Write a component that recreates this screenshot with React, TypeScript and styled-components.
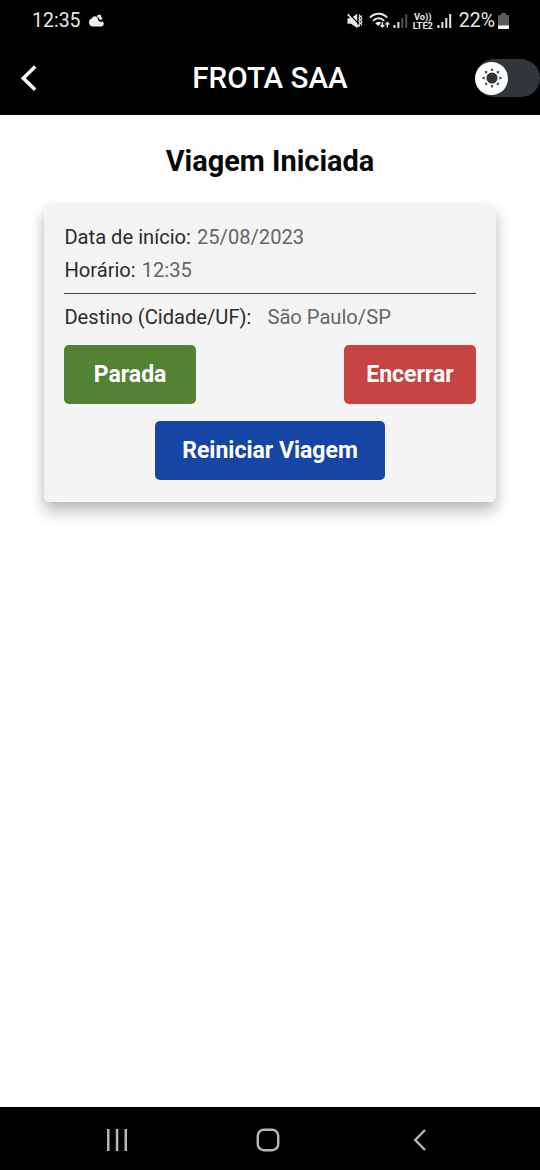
import React from 'react';
import styled, { createGlobalStyle } from 'styled-components';

const GlobalStyle = createGlobalStyle`
  * { box-sizing: border-box; }
  body { margin: 0; background: #fff; font-family: Roboto, "Liberation Sans", sans-serif; }
`;

const Screen = styled.div`
  display: flex;
  flex-direction: column;
  width: 540px;
  height: 1170px;
  background: #fff;
  overflow: hidden;
`;

const StatusBar = styled.div`
  display: flex;
  justify-content: space-between;
  height: 40px;
  padding: 0 31px 0 32px;
  background: #000;
  color: #e6e6e6;
`;

const StatusGroup = styled.div`
  display: flex;
  align-items: center;
  height: 41px;
`;

const StatusText = styled.span<{ $left?: number }>`
  margin-left: ${({ $left }) => $left ?? 0}px;
  font-size: 19.5px;
  line-height: 41px;
  white-space: nowrap;
`;

const Icon = styled.svg<{ $left?: number }>`
  display: block;
  flex: none;
  margin-left: ${({ $left }) => $left ?? 0}px;
`;

const LteBadge = styled.div`
  display: flex;
  flex-direction: column;
  align-items: center;
  width: 22px;
  margin-left: 4px;
  font-size: 9.3px;
  font-weight: 700;
  line-height: 9px;
  white-space: nowrap;
`;

const Header = styled.header`
  display: grid;
  grid-template-columns: 65px 1fr 65px;
  align-items: center;
  height: 75px;
  padding-top: 1px;
  background: #000;
  color: #fff;
`;

const BackButton = styled.button`
  display: flex;
  padding: 0 0 0 20px;
  border: 0;
  background: none;
`;

const HeaderTitle = styled.h1`
  margin: 0;
  font-size: 29.6px;
  font-weight: 500;
  line-height: 34px;
  text-align: center;
  white-space: nowrap;
`;

const ThemeSwitch = styled.div`
  display: flex;
  align-items: center;
  width: 65px;
  height: 38px;
  border-radius: 19px;
  background: #30363a;
`;

const SwitchKnob = styled.div`
  display: flex;
  align-items: center;
  justify-content: center;
  width: 33px;
  height: 33px;
  border-radius: 50%;
  background: #fff;
`;

const Main = styled.main`
  flex: 1;
  padding: 30px 44.4px 0;
`;

const Title = styled.h2`
  margin: 0 0 26px;
  font-size: 28.9px;
  font-weight: 700;
  line-height: 33px;
  color: #080808;
  text-align: center;
  white-space: nowrap;
`;

const Card = styled.section`
  height: 298px;
  padding: 17px 20px;
  margin-top: -0.5px;
  border-radius: 5px;
  background: #f4f4f4;
  box-shadow: 0 9px 15px rgba(0, 0, 0, 0.27), 0 1px 10px rgba(0, 0, 0, 0.03);
`;

const InfoRow = styled.div<{ $gap?: number }>`
  display: flex;
  gap: ${({ $gap }) => $gap ?? 6}px;
  height: 33px;
  font-size: 20.15px;
  line-height: 33px;
  white-space: nowrap;
`;

const Label = styled.span`
  color: #2c2c2c;
`;

const Value = styled.span`
  color: #666;
`;

const Divider = styled.hr`
  height: 1px;
  margin: 6px 0 7px;
  border: 0;
  background: #4a4a4a;
`;

const ButtonRow = styled.div<{ $justify: string; $top: number }>`
  display: flex;
  justify-content: ${({ $justify }) => $justify};
  margin-top: ${({ $top }) => $top}px;
`;

const ActionButton = styled.button<{ $color: string; $width: number }>`
  width: ${({ $width }) => $width}px;
  height: 59px;
  padding: 0;
  border: 0;
  border-radius: 5px;
  background: ${({ $color }) => $color};
  color: #fff;
  font-family: inherit;
  font-size: 23px;
  font-weight: 700;
  white-space: nowrap;
`;

const NavBar = styled.nav`
  display: flex;
  align-items: center;
  justify-content: space-between;
  height: 63px;
  padding: 3px 113px 0 106px;
  background: #000;
`;

const HomeIcon = styled(Icon)`
  margin-right: 6px;
`;

const SignalIcon = ({ left, weak }: { left: number; weak?: boolean }) => (
  <Icon $left={left} width="15" height="16" viewBox="0 0 15 16" fill="#e6e6e6">
    <rect x="0.5" y="12" width="2" height="3" />
    <rect x="4.4" y="9" width="2" height="6" />
    <rect x="8.3" y="5" width="2" height="10" opacity={weak ? 0.35 : 1} />
    <rect x="12.2" y="1" width="2" height="14" opacity={weak ? 0.35 : 1} />
  </Icon>
);

const rays = [0, 45, 90, 135, 180, 225, 270, 315];

export default function App() {
  return (
    <Screen>
      <GlobalStyle />
      <StatusBar>
        <StatusGroup>
          <StatusText>12:35</StatusText>
          <Icon $left={7} width="16" height="13" viewBox="0 0 16 13" fill="#eee">
            <path d="M4.5 12.500a4.200 4.200 0 0 1-.3-8.200C5 1.700 9.200 1.500 10 5c.2.900.4 1.500 1 2.200 1 .8 3 .1 4.200.8 1.300 2 .1 4.500-2.200 4.500Z" />
            <path d="M8.400 2.200C9.300.800 11.400.200 13 1.100c-.3 1.300.3 2.400 1.600 3-.2 1.200-1.600 2-2.900 1.700C11.300 4.100 10.200 2.900 8.400 2.200Z" />
          </Icon>
        </StatusGroup>
        <StatusGroup>
          <Icon width="16" height="16" viewBox="0 0 16 16" fill="#e6e6e6">
            <path d="M.5 5.200H4L10.200.800V15L4 10.800H.500Z" />
            <path d="M2.200 1.200 12 11" stroke="#000" strokeWidth="1.200" />
            <path d="m.8 1.300 11 12.700" stroke="#e6e6e6" strokeWidth="1.700" />
            <path d="m12 1.500 1 1.700-1 1.700 1 1.700-1 1.700 1 1.700-1 1.700 1 1.700M14.600 2.500l-.8 1.500 1 1.500-1 1.700 1 1.700-1 1.700 1 1.700" fill="none" stroke="#e6e6e6" strokeWidth="1.200" />
          </Icon>
          <Icon $left={6} width="22" height="17" viewBox="0 0 22 17" fill="none" stroke="#e6e6e6" strokeWidth="1.900">
            <path d="M1 5.600C5.700.500 13.500.500 18.200 5.600M4 8.800c3.200-3.400 8-3.400 11.200 0" />
            <path d="m6.200 11.300c2-2 4.400-2 6-.6l-3 3.300Z" fill="#e6e6e6" stroke="none" />
            <path d="M13.400 10v5M11.500 13l1.900 2 1.900-2M18.400 15.500v-5M16.500 12.500l1.900-2 1.900 2" strokeWidth="1.400" />
          </Icon>
          <SignalIcon left={2} weak />
          <LteBadge>
            <span>Vo))</span>
            <span>LTE2</span>
          </LteBadge>
          <SignalIcon left={3} />
          <StatusText $left={7}>22%</StatusText>
          <Icon $left={3} width="11" height="16" viewBox="0 0 11 16">
            <path d="M3 0h5v2h2a1 1 0 0 1 1 1v12a1 1 0 0 1-1 1H1a1 1 0 0 1-1-1V3a1 1 0 0 1 1-1h2Z" fill="#5c5c5c" />
            <path d="M0 12.500h11V15a1 1 0 0 1-1 1H1a1 1 0 0 1-1-1Z" fill="#fff" />
          </Icon>
        </StatusGroup>
      </StatusBar>
      <Header>
        <BackButton aria-label="Voltar">
          <Icon width="18" height="28" viewBox="0 0 18 28" fill="none" stroke="#fff" strokeWidth="3.500">
            <path d="M15.200 2.400 3.300 14.200l11.900 11.600" />
          </Icon>
        </BackButton>
        <HeaderTitle>FROTA SAA</HeaderTitle>
        <ThemeSwitch>
          <SwitchKnob>
            <Icon width="24" height="24" viewBox="-12 -12 24 24" fill="#30363a">
              <circle r="5.600" />
              {rays.map((angle) => (
                <path key={angle} d="M-1.500-7.300 0-10.300l1.500 3Z" transform={`rotate(${angle})`} />
              ))}
            </Icon>
          </SwitchKnob>
        </ThemeSwitch>
      </Header>
      <Main>
        <Title>Viagem Iniciada</Title>
        <Card>
          <InfoRow>
            <Label>Data de início:</Label>
            <Value>25/08/2023</Value>
          </InfoRow>
          <InfoRow>
            <Label>Horário:</Label>
            <Value>12:35</Value>
          </InfoRow>
          <Divider />
          <InfoRow $gap={16}>
            <Label>Destino (Cidade/UF):</Label>
            <Value>São Paulo/SP</Value>
          </InfoRow>
          <ButtonRow $justify="space-between" $top={11}>
            <ActionButton $color="#528233" $width={131.4}>Parada</ActionButton>
            <ActionButton $color="#c74444" $width={131.4}>Encerrar</ActionButton>
          </ButtonRow>
          <ButtonRow $justify="center" $top={17}>
            <ActionButton $color="#1745a6" $width={230}>Reiniciar Viagem</ActionButton>
          </ButtonRow>
        </Card>
      </Main>
      <NavBar>
        <Icon width="22" height="24" viewBox="0 0 22 24" fill="#b5b5b5">
          <rect x="1" y="1" width="2.500" height="22" />
          <rect x="9.800" y="1" width="2.500" height="22" />
          <rect x="18.500" y="1" width="2.500" height="22" />
        </Icon>
        <HomeIcon width="24" height="24" viewBox="0 0 24 24" fill="none" stroke="#b5b5b5" strokeWidth="2.500">
          <rect x="1.800" y="1.800" width="20.400" height="20.400" rx="6" />
        </HomeIcon>
        <Icon width="14" height="24" viewBox="0 0 14 24" fill="none" stroke="#b5b5b5" strokeWidth="2.500">
          <path d="M12 2 2.300 12l9.700 10" />
        </Icon>
      </NavBar>
    </Screen>
  );
}
